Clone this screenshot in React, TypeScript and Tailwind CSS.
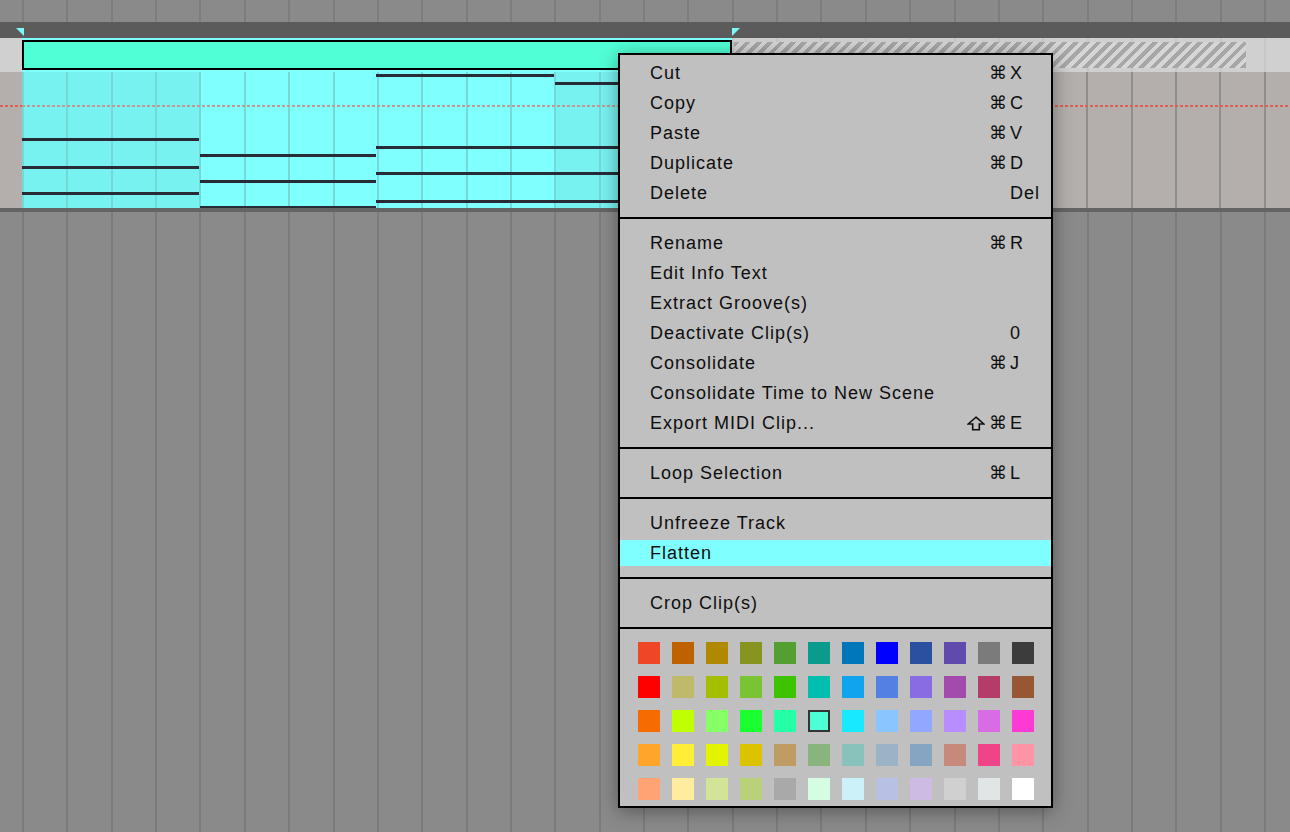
import React from "react";

const BEAT = "w-[44.36px] shrink-0 border-l-2";

function beats(n: number, line: string) {
  return Array.from({ length: n }, (_, i) => <div key={i} className={`${BEAT} ${line}`} />);
}

const bars = [
  { bg: "bg-[#77f2f0]" },
  { bg: "bg-[#80ffff]" },
  { bg: "bg-[#80ffff]" },
  { bg: "bg-[#78f2f0]" },
];

// midi notes inside the clip: left, top, width (px, relative to clip body)
const notes = [
  { x: 0, y: 66, w: 177 },
  { x: 0, y: 94, w: 177 },
  { x: 0, y: 120, w: 177 },
  { x: 178, y: 82, w: 176 },
  { x: 178, y: 108, w: 176 },
  { x: 178, y: 134, w: 176 },
  { x: 354, y: 2, w: 178 },
  { x: 354, y: 74, w: 356 },
  { x: 354, y: 100, w: 356 },
  { x: 354, y: 128, w: 356 },
  { x: 533, y: 10, w: 177 },
];

type Item = { label: string; shift?: boolean; cmd?: boolean; key?: string; active?: boolean };

const sections: Item[][] = [
  [
    { label: "Cut", cmd: true, key: "X" },
    { label: "Copy", cmd: true, key: "C" },
    { label: "Paste", cmd: true, key: "V" },
    { label: "Duplicate", cmd: true, key: "D" },
    { label: "Delete", key: "Del" },
  ],
  [
    { label: "Rename", cmd: true, key: "R" },
    { label: "Edit Info Text" },
    { label: "Extract Groove(s)" },
    { label: "Deactivate Clip(s)", key: "0" },
    { label: "Consolidate", cmd: true, key: "J" },
    { label: "Consolidate Time to New Scene" },
    { label: "Export MIDI Clip...", shift: true, cmd: true, key: "E" },
  ],
  [{ label: "Loop Selection", cmd: true, key: "L" }],
  [{ label: "Unfreeze Track" }, { label: "Flatten", active: true }],
  [{ label: "Crop Clip(s)" }],
];

const palette = [
  ["#ee4627", "#bf6100", "#b08900", "#879520", "#549f32", "#0b9b8c", "#0077bb", "#0000ff", "#2c50a0", "#604bad", "#7b7b7b", "#3c3c3c"],
  ["#ff0000", "#bfba69", "#a6be00", "#7ac434", "#3dc300", "#00bfaf", "#10a4ee", "#5480e4", "#886ce4", "#a34bad", "#b53c69", "#965735"],
  ["#f66c03", "#bfff00", "#87ff67", "#1aff2f", "#25ffa8", "#4dffd5", "#19e9ff", "#8bc5ff", "#92a7ff", "#b88dff", "#d86ce4", "#ff39d4"],
  ["#ffa529", "#ffee35", "#e3f400", "#dbc300", "#bf9c63", "#89b47d", "#88c2ba", "#9bb3c4", "#85a5c2", "#c68a7c", "#f14387", "#ff94a6"],
  ["#ffa374", "#ffec9f", "#d2e498", "#bad17b", "#a9a9a9", "#d4fde1", "#cdf1f8", "#b8c1e3", "#cdbbe4", "#d0d0d0", "#dfe6e5", "#ffffff"],
];

function ShiftIcon() {
  return (
    <svg width="18" height="15" viewBox="0 0 18 15" className="mr-[4px]">
      <polygon points="9,1.2 16.8,8 12.3,8 12.3,13.8 5.7,13.8 5.7,8 1.2,8" fill="none" stroke="#111" strokeWidth="1.6" strokeLinejoin="miter" />
    </svg>
  );
}

function MenuRow({ item }: { item: Item }) {
  return (
    <div className="h-[30px] py-[2px]">
      <div className={`flex h-full items-center pl-[30px] ${item.active ? "bg-[#7fffff]" : ""}`}>
        <span className="flex-1">{item.label}</span>
        <span className="flex items-center pr-[3px] font-['DejaVu_Sans',sans-serif] tracking-normal">
          {item.shift && <ShiftIcon />}
          {item.cmd && "⌘"}
        </span>
        <span className="w-[41px]">{item.key}</span>
      </div>
    </div>
  );
}

function ContextMenu() {
  return (
    <div className="absolute left-[618px] top-[53px] z-30 w-[435px] border-2 border-black bg-[#c0c0c0] text-[18px] leading-none tracking-[1px] text-[#0e0e0e] shadow-[0_3px_18px_rgba(0,0,0,0.38)] font-['Liberation_Sans',Arial,sans-serif]">
      {sections.map((sec, i) => (
        <div key={i} className={`border-b-2 border-black pb-[9px] ${i === 0 ? "pt-[3px]" : "pt-[9px]"}`}>
          {sec.map((item) => (
            <MenuRow key={item.label} item={item} />
          ))}
        </div>
      ))}
      <div className="flex flex-col gap-[12px] pb-[6px] pl-[18px] pt-[13px]">
        {palette.map((row, r) => (
          <div key={r} className="flex gap-[12px]">
            {row.map((c, k) => (
              <div
                key={k}
                className={`h-[22px] w-[22px] ${r === 2 && k === 5 ? "border-2 border-[#333]" : ""}`}
                style={{ backgroundColor: c }}
              />
            ))}
          </div>
        ))}
      </div>
    </div>
  );
}

function ClipBody() {
  return (
    <div className="relative z-10 flex w-[709.5px] shrink-0 overflow-hidden">
      {bars.map((b, i) => (
        <div key={i} className={`flex ${b.bg}`}>
          {beats(4, "border-[#74d8d6]")}
        </div>
      ))}
      <div className="absolute left-0 right-0 top-[33px] h-[2px] bg-[repeating-linear-gradient(90deg,#c29894_0_3px,transparent_3px_5px)]" />
      {notes.map((n, i) => (
        <div
          key={i}
          className="absolute h-[3px] bg-[#262b36]"
          style={{ left: n.x, top: n.y, width: n.w }}
        />
      ))}
    </div>
  );
}

export default function App() {
  return (
    <div className="relative flex h-[832px] w-[1290px] flex-col overflow-hidden bg-[#8a8a8a]">
      {/* ruler */}
      <div className="flex h-[22px] shrink-0 overflow-hidden">
        <div className="w-[22px] shrink-0" />
        {beats(29, "border-[#7d7d7d]")}
      </div>

      {/* loop markers */}
      <div className="flex h-[16px] shrink-0 items-start bg-[#5b5b5b] pt-[6px]">
        <svg width="8" height="8" viewBox="0 0 8 8" className="ml-[16px] shrink-0">
          <polygon points="0,0 8,0 8,8" fill="#7ff7f7" />
        </svg>
        <svg width="8" height="8" viewBox="0 0 8 8" className="ml-[708px] shrink-0">
          <polygon points="0,0 8,0 0,8" fill="#7ff7f7" />
        </svg>
      </div>

      {/* clip header row */}
      <div className="relative flex h-[34px] shrink-0 bg-[#d1d0d0]">
        <div className="absolute inset-0 flex">
          <div className="w-[22px] shrink-0" />
          {beats(29, "border-[#c8c7c7]")}
        </div>
        <div className="w-[22px] shrink-0" />
        <div className="relative w-[710px] shrink-0 bg-[#80ffff] py-[2px]">
          <div className="h-full border-2 border-black bg-[#50ffd6]" />
        </div>
        <div className="relative ml-[2px] mt-[4px] h-[26px] w-[512px] shrink-0 bg-[repeating-linear-gradient(135deg,#a7a7a7_0_4px,#d6d6d6_4px_8px)]" />
      </div>

      {/* track lane */}
      <div className="relative flex h-[136px] shrink-0 overflow-hidden bg-[#b4afad]">
        <div className="absolute left-0 right-0 top-[33px] h-[2px] bg-[repeating-linear-gradient(90deg,#dc5e57_0_3px,transparent_3px_5px)]" />
        <div className="w-[22px] shrink-0" />
        <ClipBody />
        {beats(13, "border-[#908e8d]")}
      </div>

      <div className="h-[4px] shrink-0 bg-[#646464]" />

      {/* empty lanes */}
      <div className="flex flex-1 overflow-hidden">
        <div className="w-[22px] shrink-0" />
        {beats(29, "border-[#7b7b7b]")}
      </div>

      <ContextMenu />
    </div>
  );
}
